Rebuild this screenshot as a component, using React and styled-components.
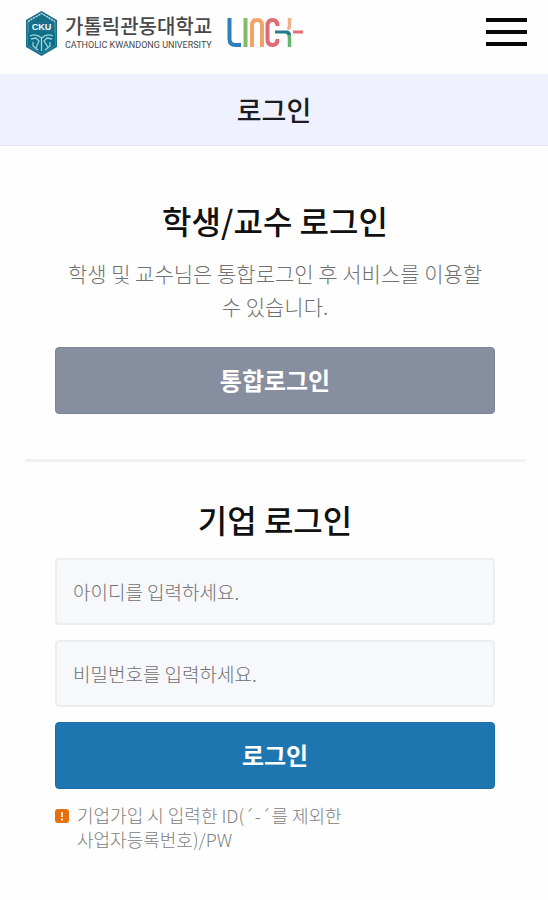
import React from "react";
import styled, { createGlobalStyle } from "styled-components";

const GlobalStyle = createGlobalStyle`
  *, *::before, *::after { box-sizing: border-box; }
  body {
    margin: 0;
    background: #fefefe;
    color: #111;
    font-family: "Noto Sans CJK KR", "Noto Sans", sans-serif;
  }
  h1, h2, p { margin: 0; }
  button, input { font-family: inherit; }
`;

const Header = styled.header`
  display: flex;
  align-items: flex-start;
  justify-content: space-between;
  height: 74px;
  padding: 10px 21px 0 25px;
`;

const Brand = styled.a`
  display: flex;
  align-items: flex-start;
  color: #48484a;
  text-decoration: none;
`;

const Emblem = styled.svg`
  width: 33px;
  height: 47px;
  margin-right: 7px;
`;

const BrandText = styled.span`
  display: flex;
  flex-direction: column;
  width: 151px;
  padding-top: 1px;
`;

const BrandName = styled.span`
  font-size: 20px;
  line-height: 29px;
  font-weight: 500;
  white-space: nowrap;
`;

const BrandSub = styled.span`
  font-family: Roboto, sans-serif;
  font-size: 9px;
  line-height: 10px;
  white-space: nowrap;
`;

const LincLogo = styled.svg`
  width: 78px;
  height: 36px;
  margin: 5px 0 0 10px;
`;

const MenuButton = styled.button`
  display: flex;
  flex-direction: column;
  justify-content: space-between;
  width: 41px;
  height: 28px;
  margin-top: 8px;
  padding: 0;
  border: 0;
  background: none;
  cursor: pointer;
`;

const MenuBar = styled.span`
  width: 100%;
  height: 4px;
  background: #080808;
`;

const TitleBar = styled.div`
  padding: 15px 0 16px;
  background: #eff2fe;
  border-top: 1px solid #f1f3f6;
  border-bottom: 1px solid #e4e5ea;
  text-align: center;
`;

const PageTitle = styled.h1`
  font-size: 27px;
  line-height: 39px;
  font-weight: 500;
  color: #1b1c22;
`;

const Content = styled.main`
  margin: 0 23px 0 25px;
`;

const Section = styled.section`
  padding: ${(p) => (p.$first ? "52px 30px 45px" : "35px 30px 48px")};
  border-bottom: ${(p) => (p.$first ? "3px solid #f1f1f1" : "0")};
`;

const SectionTitle = styled.h2`
  font-size: 32px;
  line-height: 44px;
  font-weight: 500;
  text-align: center;
`;

const Description = styled.p`
  margin: 15px 0 24px;
  padding: 0 8px;
  color: #707070;
  font-size: 21px;
  line-height: 33px;
  font-weight: 300;
  text-align: center;
  word-break: keep-all;
`;

const Form = styled.form`
  display: flex;
  flex-direction: column;
  gap: 15px;
  margin-top: 17px;
`;

const Field = styled.input`
  width: 100%;
  height: 67px;
  padding: 0 16px;
  border: 2px solid #eceef0;
  border-radius: 4px;
  background: #f6f8fc;
  color: #333;
  font-size: 19px;
  font-weight: 300;

  &::placeholder {
    color: #707070;
    opacity: 1;
  }
`;

const ActionButton = styled.button`
  width: 100%;
  height: 67px;
  padding: 0 0 2px;
  border: 1px solid ${(p) => (p.$primary ? "#1b6fa6" : "#7c8496")};
  border-radius: 4px;
  background: ${(p) => (p.$primary ? "#1d76b0" : "#868e9f")};
  color: #fff;
  font-size: 24px;
  font-weight: 700;
  cursor: pointer;
`;

const Notice = styled.div`
  display: flex;
  align-items: flex-start;
  gap: 8px;
  margin-top: 14px;
`;

const NoticeIcon = styled.svg`
  flex: none;
  width: 14px;
  height: 14px;
  margin-top: 6px;
`;

const NoticeText = styled.p`
  color: #808080;
  font-size: 18px;
  line-height: 24px;
  font-weight: 300;
`;

function UniversityEmblem() {
  return (
    <Emblem viewBox="0 0 33 47" aria-hidden="true">
      <path d="M16.500 1 32 10v27l-15.500 9L1 37V10z" fill="#176f89" />
      <path d="M16.500 3.500 30 11.500v24l-13.500 8L3 35.500v-24z" fill="none" stroke="#5b9fb1" strokeWidth="1" />
      <path d="M3 11.500 16.500 3.500 30 11.500" fill="none" stroke="#b4d4dc" strokeWidth="1.500" strokeDasharray="2 1" />
      <path d="M3 22.500h27v13l-13.500 8L3 35.500z" fill="#0c708b" />
      <path
        d="M5 26c4-2 8-1 11.500 2 3.500-3 7.500-4 11.500-2M6 29l5-1 3 3-3 7M27 29l-5-1-3 3 4 6M16.500 28v13M8 32v4l5 4M25 32v4l-5 4"
        fill="none"
        stroke="#a5d0da"
        strokeWidth="1.300"
      />
      <text x="16.500" y="20" fill="#fff" fontFamily="Liberation Sans, sans-serif" fontSize="9" fontWeight="700" textAnchor="middle">
        CKU
      </text>
    </Emblem>
  );
}

function Linc() {
  return (
    <LincLogo viewBox="0 0 78 36" role="img" aria-label="LINC+" fill="none" strokeWidth="4">
      <path d="M3.500 3v21q0 6 6 6H15" stroke="#2f7fbd" />
      <path d="M19.500 3v29" stroke="#80bd65" />
      <path d="M26 32V10q0-5 5-5t5 5v22" stroke="#f2a365" />
      <path d="M51.500 11q0-6-5-6t-5 6v13q0 6 5 6t5-6" stroke="#df6b78" />
      <path d="M60 17q3.500 1 3.500 6v9" stroke="#62b56c" strokeWidth="3.500" />
      <path d="M49 17h11q3.500 0 3.500 3" stroke="#267a91" strokeWidth="3" />
      <path d="M63.500 3v8q0 2-2 3" stroke="#efb18a" strokeWidth="3.500" />
      <path d="M67 17h10" stroke="#e56b76" strokeWidth="3" />
    </LincLogo>
  );
}

export default function App() {
  return (
    <>
      <GlobalStyle />
      <Header>
        <Brand href="#">
          <UniversityEmblem />
          <BrandText>
            <BrandName>가톨릭관동대학교</BrandName>
            <BrandSub>CATHOLIC KWANDONG UNIVERSITY</BrandSub>
          </BrandText>
          <Linc />
        </Brand>
        <MenuButton type="button" aria-label="메뉴">
          <MenuBar />
          <MenuBar />
          <MenuBar />
        </MenuButton>
      </Header>
      <TitleBar>
        <PageTitle>로그인</PageTitle>
      </TitleBar>
      <Content>
        <Section $first>
          <SectionTitle>학생/교수 로그인</SectionTitle>
          <Description>학생 및 교수님은 통합로그인 후 서비스를 이용할 수 있습니다.</Description>
          <ActionButton type="button">통합로그인</ActionButton>
        </Section>
        <Section>
          <SectionTitle>기업 로그인</SectionTitle>
          <Form onSubmit={(e) => e.preventDefault()}>
            <Field type="text" aria-label="아이디" placeholder="아이디를 입력하세요." autoComplete="username" />
            <Field type="password" aria-label="비밀번호" placeholder="비밀번호를 입력하세요." autoComplete="current-password" />
            <ActionButton type="submit" $primary>
              로그인
            </ActionButton>
          </Form>
          <Notice>
            <NoticeIcon viewBox="0 0 14 14" aria-hidden="true">
              <rect width="14" height="14" rx="3" fill="#e5700f" />
              <path d="M7 3v5M7 9.500v2" stroke="#ffe3c4" strokeWidth="2" />
            </NoticeIcon>
            <NoticeText>
              기업가입 시 입력한 ID(´-´를 제외한
              <br />
              사업자등록번호)/PW
            </NoticeText>
          </Notice>
        </Section>
      </Content>
    </>
  );
}
